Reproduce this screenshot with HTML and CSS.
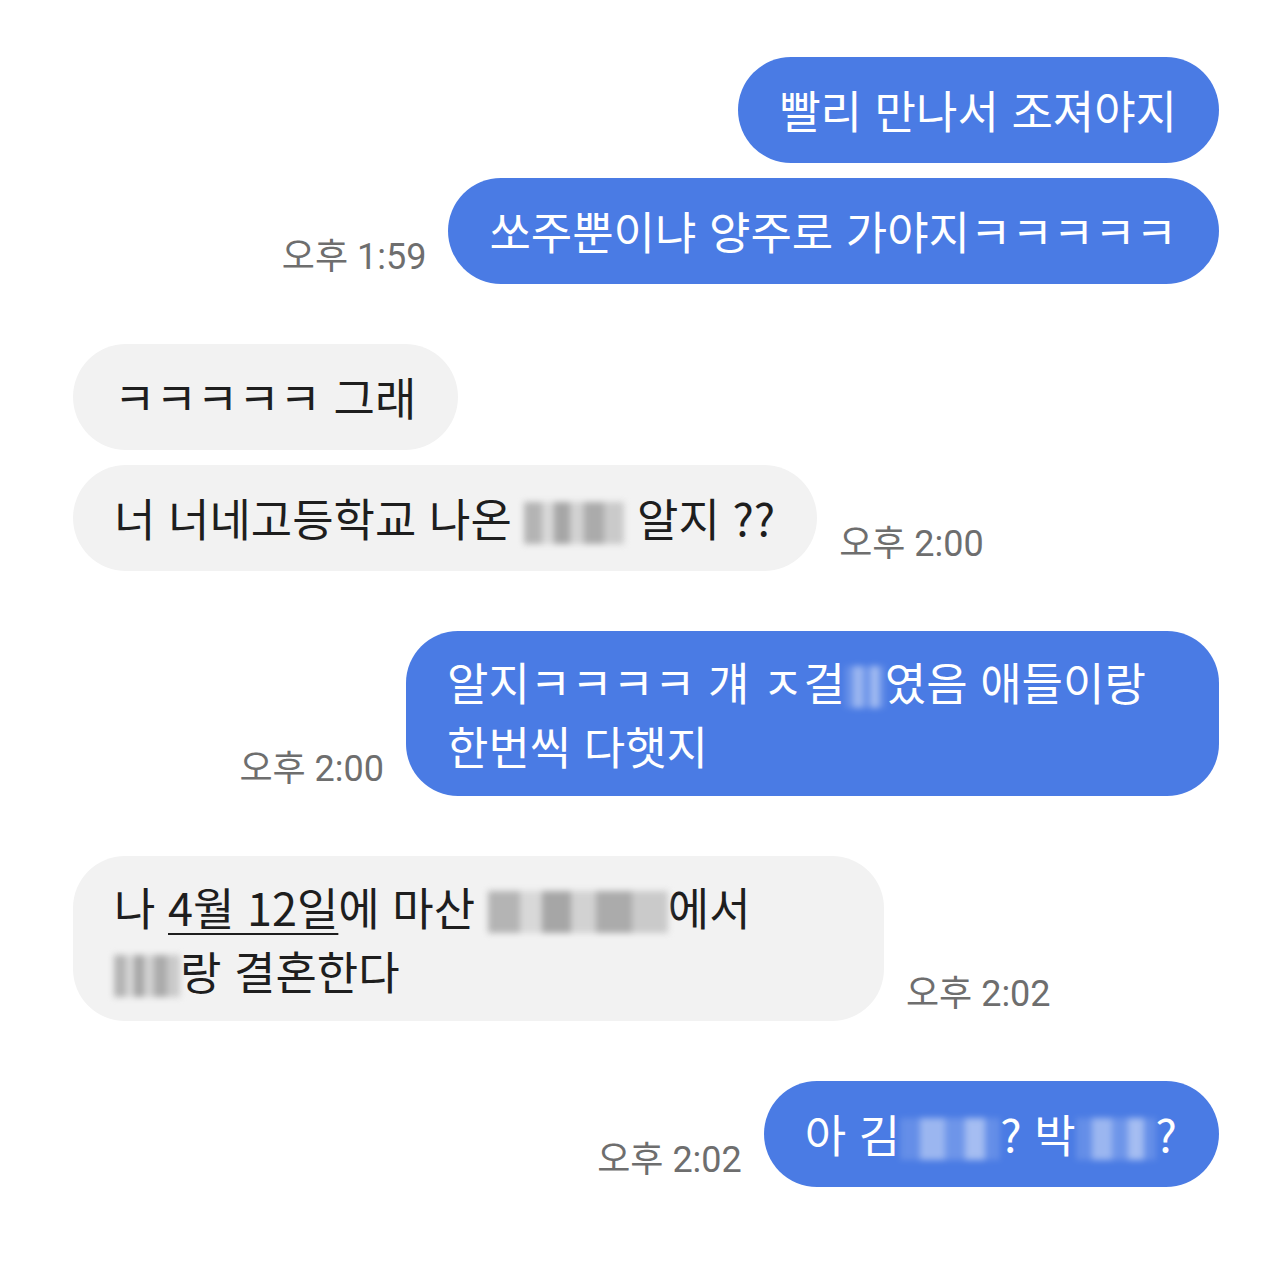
FILE: index.html
```html
<!DOCTYPE html>
<html lang="ko">
<head>
    <meta charset="UTF-8">
    <meta name="viewport" content="width=device-width, initial-scale=1.0">
    <title>Chat</title>
    <link rel="stylesheet" href="styles.css">
</head>
<body>

<div class="chat">

    <div class="group">
        <div class="row me">
            <div class="bubble blue">빨리 만나서 조져야지</div>
        </div>
        <div class="row me">
            <span class="time">오후 1:59</span>
            <div class="bubble blue">쏘주뿐이냐 양주로 가야지ㅋㅋㅋㅋㅋ</div>
        </div>
    </div>

    <div class="group">
        <div class="row you">
            <div class="bubble gray">ㅋㅋㅋㅋㅋ 그래</div>
        </div>
        <div class="row you">
            <div class="bubble gray">너 너네고등학교 나온 <span class="blur dark w100"></span> 알지 ??</div>
            <span class="time">오후 2:00</span>
        </div>
    </div>

    <div class="group">
        <div class="row me">
            <span class="time">오후 2:00</span>
            <div class="bubble blue wide">알지ㅋㅋㅋㅋ 걔 ㅈ걸<span class="blur light w40"></span>였음 애들이랑<br>한번씩 다햇지</div>
        </div>
    </div>

    <div class="group">
        <div class="row you">
            <div class="bubble gray wide">나 <u>4월 12일</u>에 마산 <span class="blur dark w180"></span>에서<br><span class="blur dark w66"></span>랑 결혼한다</div>
            <span class="time">오후 2:02</span>
        </div>
    </div>

    <div class="group">
        <div class="row me">
            <span class="time">오후 2:02</span>
            <div class="bubble blue">아 김<span class="blur light w100"></span>? 박<span class="blur light w80"></span>?</div>
        </div>
    </div>

</div>

</body>
</html>
```

FILE: styles.css
```css
body {
    margin: 0;
    padding: 0;
    background-color: #fff;
    font-family: 'Noto Sans CJK KR', 'Noto Sans', sans-serif;
    color: #1e1e1e;
}

.chat {
    padding: 57px 61px 40px 73px;
    display: flex;
    flex-direction: column;
    gap: 60px;
}

.group {
    display: flex;
    flex-direction: column;
    gap: 15px;
}

.row {
    display: flex;
    align-items: flex-end;
    gap: 22px;
}

.row.me {
    justify-content: flex-end;
}

.bubble {
    font-size: 45px;
    line-height: 57px;
    padding: 24px 42px 25px 41px;
    border-radius: 54px;
    white-space: nowrap;
}

.bubble.blue {
    background-color: #4a7be4; /* sent message */
    color: #fff;
}

.bubble.gray {
    background-color: #f2f2f2; /* received message */
    color: #1e1e1e;
}

.bubble.wide {
    width: 813px;
    box-sizing: border-box;
    padding-top: 19px;
    padding-bottom: 18px;
    line-height: 64px;
    border-radius: 52px;
}

.bubble.gray.wide {
    width: 811px;
}

.bubble u {
    text-underline-offset: 7px;
    text-decoration-thickness: 2px;
}

.time {
    font-family: Roboto, 'Noto Sans CJK KR', sans-serif;
    font-size: 36px;
    color: #6e6e6e;
    margin-bottom: 5px;
    white-space: nowrap;
}

/* mosaic over names */
.blur {
    display: inline-block;
    height: 42px;
    vertical-align: -7px;
    filter: blur(3px);
}

.blur.dark {
    background:
        linear-gradient(90deg, #b4b4b4 0 18%, #d8d8d8 18% 30%, #a6a6a6 30% 46%, #d2d2d2 46% 60%, #ababab 60% 80%, #cacaca 80%);
}

.blur.light {
    background:
        linear-gradient(90deg, rgba(255,255,255,0.15) 0 20%, rgba(255,255,255,0.45) 20% 45%, rgba(255,255,255,0.2) 45% 65%, rgba(255,255,255,0.5) 65% 85%, rgba(255,255,255,0.15) 85%);
}

.w40 { width: 40px; }
.w66 { width: 66px; }
.w80 { width: 80px; }
.w100 { width: 100px; }
.w180 { width: 180px; }
```
